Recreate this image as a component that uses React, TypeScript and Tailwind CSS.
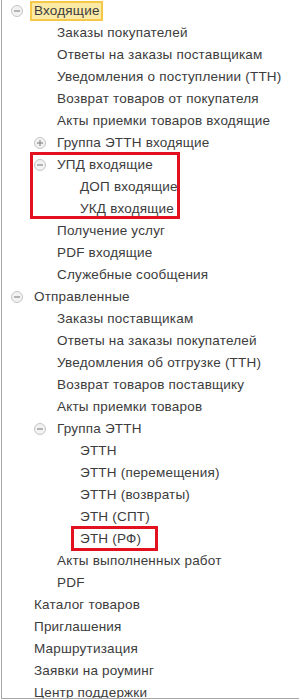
import React from "react";

type Item = { t: string; l: number; icon?: "minus" | "plus"; hl?: boolean };

const items: Item[] = [
  { t: "Входящие", l: 0, icon: "minus", hl: true },
  { t: "Заказы покупателей", l: 1 },
  { t: "Ответы на заказы поставщикам", l: 1 },
  { t: "Уведомления о поступлении (ТТН)", l: 1 },
  { t: "Возврат товаров от покупателя", l: 1 },
  { t: "Акты приемки товаров входящие", l: 1 },
  { t: "Группа ЭТТН входящие", l: 1, icon: "plus" },
  { t: "УПД входящие", l: 1, icon: "minus" },
  { t: "ДОП входящие", l: 2 },
  { t: "УКД входящие", l: 2 },
  { t: "Получение услуг", l: 1 },
  { t: "PDF входящие", l: 1 },
  { t: "Служебные сообщения", l: 1 },
  { t: "Отправленные", l: 0, icon: "minus" },
  { t: "Заказы поставщикам", l: 1 },
  { t: "Ответы на заказы покупателей", l: 1 },
  { t: "Уведомления об отгрузке (ТТН)", l: 1 },
  { t: "Возврат товаров поставщику", l: 1 },
  { t: "Акты приемки товаров", l: 1 },
  { t: "Группа ЭТТН", l: 1, icon: "minus" },
  { t: "ЭТТН", l: 2 },
  { t: "ЭТТН (перемещения)", l: 2 },
  { t: "ЭТТН (возвраты)", l: 2 },
  { t: "ЭТН (СПТ)", l: 2 },
  { t: "ЭТН (РФ)", l: 2 },
  { t: "Акты выполненных работ", l: 1 },
  { t: "PDF", l: 1 },
  { t: "Каталог товаров", l: 0 },
  { t: "Приглашения", l: 0 },
  { t: "Маршрутизация", l: 0 },
  { t: "Заявки на роуминг", l: 0 },
  { t: "Центр поддержки", l: 0 },
];

const indent = ["pl-[32px]", "pl-[55px]", "pl-[78px]"];
const iconLeft = ["left-[9px]", "left-[32px]", "left-[55px]"];

function Toggle({ kind }: { kind: "minus" | "plus" }) {
  return (
    <svg width="12" height="12" viewBox="0 0 12 12" className="block">
      <circle cx="6" cy="6" r="5.5" fill="#f2f2f2" stroke="#c4c4c4" strokeWidth="1" />
      <line x1="3" y1="6" x2="9" y2="6" stroke="#8a8a8a" strokeWidth="1.2" />
      {kind === "plus" && <line x1="6" y1="3" x2="6" y2="9" stroke="#8a8a8a" strokeWidth="1.2" />}
    </svg>
  );
}

export default function App() {
  return (
    <div className="w-[299px] h-[699px] bg-white pl-[1px] overflow-hidden">
      <div
        className="relative h-full border-l border-b border-[#a6a6a6] overflow-hidden text-[13.5px] tracking-[0.2px] text-[#3c3c3c]"
        style={{ fontFamily: '"Liberation Sans", Arial, sans-serif' }}
      >
        {items.map((it, i) => (
          <div key={i} className={`relative h-[22px] flex items-center whitespace-nowrap ${indent[it.l]}`}>
            {it.icon && (
              <span className={`absolute top-[5px] ${iconLeft[it.l]}`}>
                <Toggle kind={it.icon} />
              </span>
            )}
            {it.hl ? (
              <span className="-ml-[4px] pl-[2px] pr-[1px] h-[20px] flex items-center bg-[#fbe9a6] border-2 border-[#f6c84a]">
                {it.t}
              </span>
            ) : (
              <span>{it.t}</span>
            )}
          </div>
        ))}
        <div className="absolute left-[28px] top-[152px] w-[150px] h-[67px] border-[3px] border-[#e3101f]" />
        <div className="absolute left-[69px] top-[526px] w-[87px] h-[25px] border-[3px] border-[#e3101f]" />
      </div>
    </div>
  );
}
